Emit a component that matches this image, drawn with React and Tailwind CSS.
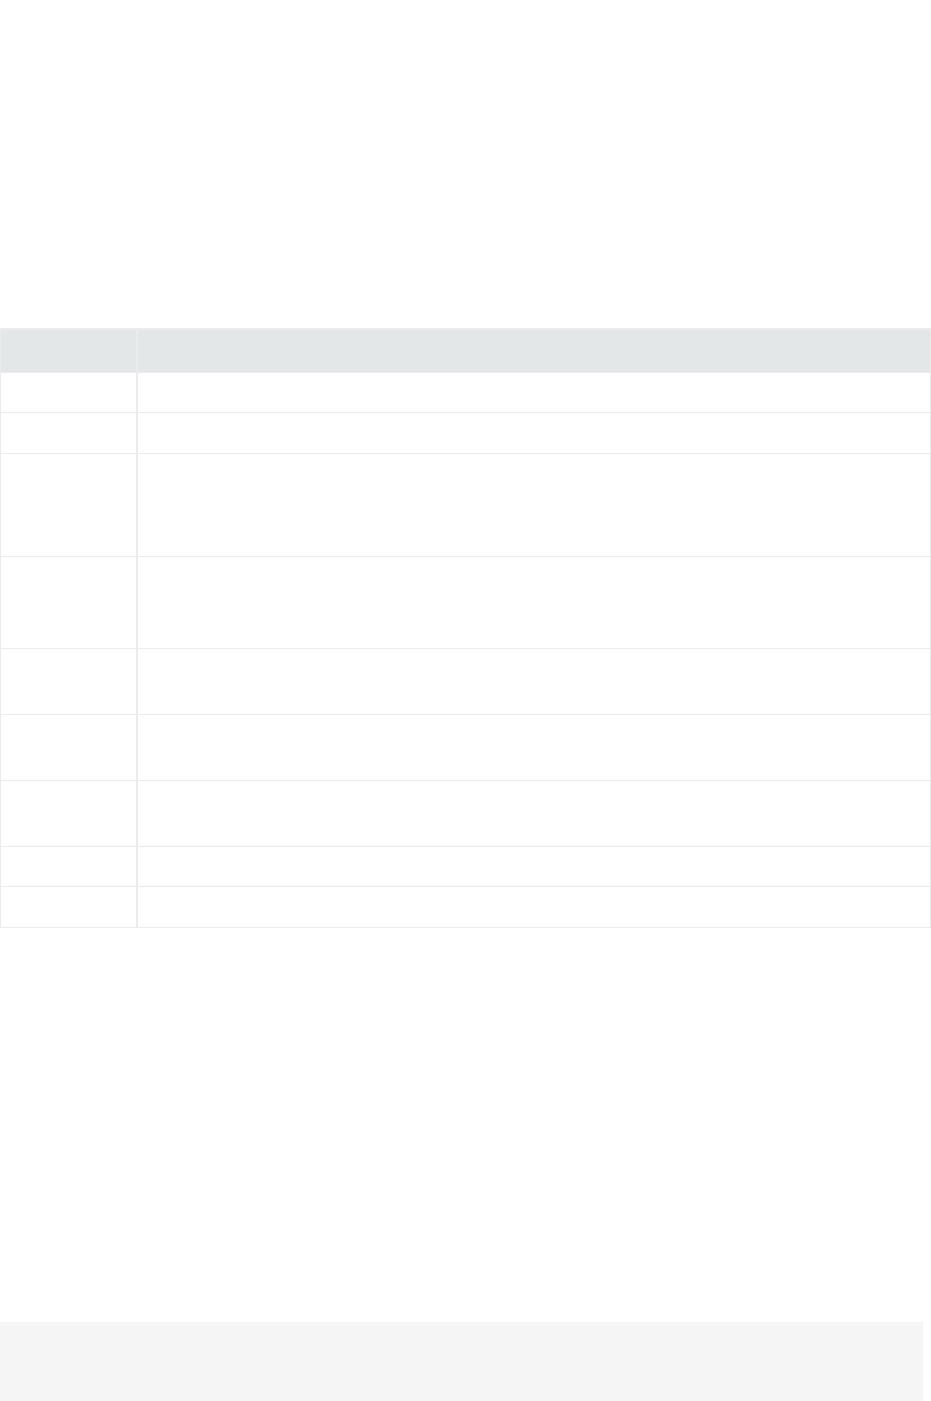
import React from "react";

// row heights taken from the screenshot (border included)
const rows = [40, 41, 103, 92, 66, 66, 66, 40, 41];

const App = () => {
  return (
    <div className="min-h-[1401px] bg-white font-['Open_Sans',sans-serif] text-sm text-[#333]">
      {/* Table */}
      <div className="pt-[328px]">
        <div className="w-[931px] border-x border-t-2 border-[#ebebeb]">
          {/* Header row */}
          <div className="flex h-[43px] border-b border-[#ebebeb] bg-[#e4e7e7]">
            <div className="w-[137px] shrink-0 border-r-2 border-[#ebebeb]"></div>
            <div className="flex-1"></div>
          </div>
          {/* Body rows */}
          {rows.map((h, i) => (
            <div
              key={i}
              className="flex border-b border-[#ebebeb]"
              style={{ height: h }}
            >
              <div className="w-[137px] shrink-0 border-r-2 border-[#ebebeb]"></div>
              <div className="flex-1"></div>
            </div>
          ))}
        </div>
      </div>

      {/* Footer block */}
      <div className="mt-[394px] h-[79px] w-[923px] bg-[#f5f5f5]"></div>
    </div>
  );
};

export default App;
